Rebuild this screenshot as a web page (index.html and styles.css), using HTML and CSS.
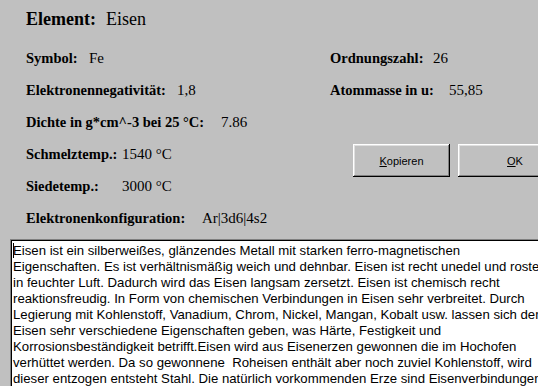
FILE: index.html
```html
<!DOCTYPE html>
<html lang="de">
<head>
<meta charset="utf-8">
<title>Element: Eisen</title>
<link rel="stylesheet" href="styles.css">
</head>
<body>
<div class="dialog">
  <div class="head">
    <span class="lbl lbl-element">Element:</span><span class="val">Eisen</span>
  </div>
  <div class="top">
    <div class="col-left">
      <div class="row"><span class="lbl lbl-symbol">Symbol:</span><span class="val">Fe</span></div>
      <div class="row"><span class="lbl lbl-neg">Elektronennegativität:</span><span class="val">1,8</span></div>
      <div class="row"><span class="lbl lbl-dichte">Dichte in g*cm^-3 bei 25 °C:</span><span class="val">7.86</span></div>
      <div class="row"><span class="lbl lbl-temp">Schmelztemp.:</span><span class="val">1540 °C</span></div>
      <div class="row"><span class="lbl lbl-temp">Siedetemp.:</span><span class="val">3000 °C</span></div>
      <div class="row"><span class="lbl lbl-konf">Elektronenkonfiguration:</span><span class="val">Ar|3d6|4s2</span></div>
    </div>
    <div class="col-right">
      <div class="row"><span class="lbl lbl-ordnung">Ordnungszahl:</span><span class="val">26</span></div>
      <div class="row"><span class="lbl lbl-masse">Atommasse in u:</span><span class="val">55,85</span></div>
      <div class="buttons">
        <button class="btn btn-copy"><u>K</u>opieren</button>
        <button class="btn btn-ok"><u>O</u>K</button>
      </div>
    </div>
  </div>
  <div class="memo">
    <div class="line"><span class="caret"></span>Eisen ist ein silberweißes, glänzendes Metall mit starken ferro-magnetischen</div>
    <div class="line">Eigenschaften. Es ist verhältnismäßig weich und dehnbar. Eisen ist recht unedel und rostet</div>
    <div class="line">in feuchter Luft. Dadurch wird das Eisen langsam zersetzt. Eisen ist chemisch recht</div>
    <div class="line">reaktionsfreudig. In Form von chemischen Verbindungen in Eisen sehr verbreitet. Durch</div>
    <div class="line">Legierung mit Kohlenstoff, Vanadium, Chrom, Nickel, Mangan, Kobalt usw. lassen sich den</div>
    <div class="line">Eisen sehr verschiedene Eigenschaften geben, was Härte, Festigkeit und</div>
    <div class="line">Korrosionsbeständigkeit betrifft.Eisen wird aus Eisenerzen gewonnen die im Hochofen</div>
    <div class="line">verhüttet werden. Da so gewonnene  Roheisen enthält aber noch zuviel Kohlenstoff, wird</div>
    <div class="line">dieser entzogen entsteht Stahl. Die natürlich vorkommenden Erze sind Eisenverbindungen</div>
  </div>
</div>
</body>
</html>
```
FILE: styles.css
```css
html, body {
  margin: 0;
  padding: 0;
  background: #c0c0c0;
  overflow: hidden;
  width: 538px;
  height: 386px;
}
.dialog {
  font-family: "Liberation Serif", "Times New Roman", serif;
  color: #000;
}
.head {
  padding: 9px 0 0 26px;
  height: 20px;
  line-height: 20px;
  font-size: 18px;
  white-space: nowrap;
}
.head .val {
  font-size: 18px;
}
.lbl {
  display: inline-block;
  font-weight: bold;
  white-space: nowrap;
}
.val {
  font-size: 15px;
  white-space: nowrap;
}
.lbl-element { width: 80px; }
.lbl-symbol { width: 63px; }
.lbl-neg { width: 151px; }
.lbl-dichte { width: 195px; }
.lbl-temp { width: 96px; }
.lbl-konf { width: 176px; }
.lbl-ordnung { width: 103px; }
.lbl-masse { width: 119px; }

.top {
  display: flex;
  margin-top: 13px;
}
.col-left {
  flex: none;
  width: 304px;
  padding-left: 26px;
}
.col-right {
  flex: none;
}
.row {
  height: 32px;
  line-height: 32px;
  font-size: 14.5px;
  white-space: nowrap;
}
.buttons {
  display: flex;
  gap: 8px;
  margin-top: 38px;
  margin-left: 23px;
}
.btn {
  height: 33px;
  padding: 0;
  border: none;
  background: #c0c0c0;
  font-family: "Liberation Sans", Arial, sans-serif;
  font-size: 11px;
  color: #000;
  box-shadow: inset -1px -1px #000, inset 1px 1px #fff, inset -2px -2px #808080, inset 2px 2px #dfdfdf;
  flex: none;
}
.btn-copy { width: 97px; }
.btn-ok { width: 114px; }

.memo {
  margin: 5px 0 0 10px;
  width: 620px;
  height: 200px;
  background: #fff;
  border-top: 1px solid #808080;
  border-left: 1px solid #808080;
  box-shadow: inset 1px 1px #000;
  padding: 3px 0 0 2px;
  font-family: "Liberation Sans", Arial, sans-serif;
  font-size: 13.2px;
  line-height: 16px;
  color: #000;
}
.line {
  white-space: pre;
}
.caret {
  display: inline-block;
  width: 1px;
  height: 15px;
  background: #000;
  vertical-align: -3px;
  margin-right: -1px;
}
```
